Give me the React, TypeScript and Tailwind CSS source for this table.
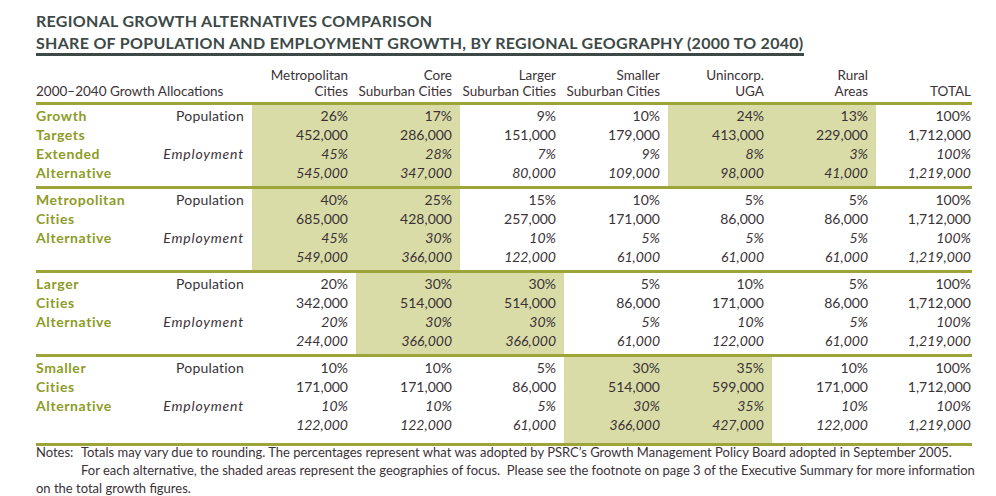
const COLUMNS: [string, string][] = [
  ["Metropolitan", "Cities"],
  ["Core", "Suburban Cities"],
  ["Larger", "Suburban Cities"],
  ["Smaller", "Suburban Cities"],
  ["Unincorp.", "UGA"],
  ["Rural", "Areas"],
];

type Group = {
  name: string[];
  shaded: number[];
  popPct: string[];
  pop: string[];
  empPct: string[];
  emp: string[];
};

const GROUPS: Group[] = [
  {
    name: ["Growth", "Targets", "Extended", "Alternative"],
    shaded: [0, 1, 4, 5],
    popPct: ["26%", "17%", "9%", "10%", "24%", "13%", "100%"],
    pop: ["452,000", "286,000", "151,000", "179,000", "413,000", "229,000", "1,712,000"],
    empPct: ["45%", "28%", "7%", "9%", "8%", "3%", "100%"],
    emp: ["545,000", "347,000", "80,000", "109,000", "98,000", "41,000", "1,219,000"],
  },
  {
    name: ["Metropolitan", "Cities", "Alternative"],
    shaded: [0, 1],
    popPct: ["40%", "25%", "15%", "10%", "5%", "5%", "100%"],
    pop: ["685,000", "428,000", "257,000", "171,000", "86,000", "86,000", "1,712,000"],
    empPct: ["45%", "30%", "10%", "5%", "5%", "5%", "100%"],
    emp: ["549,000", "366,000", "122,000", "61,000", "61,000", "61,000", "1,219,000"],
  },
  {
    name: ["Larger", "Cities", "Alternative"],
    shaded: [1, 2],
    popPct: ["20%", "30%", "30%", "5%", "10%", "5%", "100%"],
    pop: ["342,000", "514,000", "514,000", "86,000", "171,000", "86,000", "1,712,000"],
    empPct: ["20%", "30%", "30%", "5%", "10%", "5%", "100%"],
    emp: ["244,000", "366,000", "366,000", "61,000", "122,000", "61,000", "1,219,000"],
  },
  {
    name: ["Smaller", "Cities", "Alternative"],
    shaded: [3, 4],
    popPct: ["10%", "10%", "5%", "30%", "35%", "10%", "100%"],
    pop: ["171,000", "171,000", "86,000", "514,000", "599,000", "171,000", "1,712,000"],
    empPct: ["10%", "10%", "5%", "30%", "35%", "10%", "100%"],
    emp: ["122,000", "122,000", "61,000", "366,000", "427,000", "122,000", "1,219,000"],
  },
];

const FONT = "font-['Lato','Noto_Sans',sans-serif]";

function GroupRow({ group, last }: { group: Group; last: boolean }) {
  const pad = last ? "pt-px pb-[9px]" : "pt-px pb-[4px]";
  return (
    <div className="flex border-b-[3px] border-[#9da43a]">
      <div className={`flex w-[216px] shrink-0 text-[14px] leading-[19px] ${pad}`}>
        <div className="flex-1 font-bold tracking-[0.6px] text-[#8d9b27]">
          {group.name.map((line) => (
            <div key={line}>{line}</div>
          ))}
        </div>
        <div className="w-[100px] pr-2 text-right text-[#3b3238]">
          <div className="tracking-[0.2px]">Population</div>
          <div>&nbsp;</div>
          <div className="italic tracking-[0.8px]">Employment</div>
        </div>
      </div>
      {group.popPct.map((_, i) => {
        const shaded = group.shaded.includes(i);
        const total = i === 6;
        return (
          <div
            key={i}
            className={`shrink-0 text-right text-[14px] leading-[19px] text-[#3b3238] ${pad} ${
              total ? "w-[96px] pr-px" : "w-[104px] pr-2"
            } ${shaded ? "bg-[#d9dca7]" : ""}`}
          >
            <div>{group.popPct[i]}</div>
            <div>{group.pop[i]}</div>
            <div className="italic">{group.empPct[i]}</div>
            <div className="italic">{group.emp[i]}</div>
          </div>
        );
      })}
    </div>
  );
}

export default function App() {
  return (
    <div className={`h-[496px] w-[996px] overflow-hidden bg-white px-9 pt-[11px] ${FONT}`}>
      <h1 className="text-[16px] font-bold leading-[20px] tracking-[0.3px] text-[#3d4947]">
        REGIONAL GROWTH ALTERNATIVES COMPARISON
      </h1>
      <h2 className="inline-block border-b-[3px] border-[#3d4947] text-[16px] font-bold leading-[20px] tracking-[0.3px] text-[#3d4947]">
        SHARE OF POPULATION AND EMPLOYMENT GROWTH, BY REGIONAL GEOGRAPHY (2000 TO 2040)
      </h2>

      <div className="mt-[11px] w-[936px]">
        <div className="flex items-end border-b-[3px] border-[#9da43a] pb-[3px] text-[13.5px] leading-[16px] text-[#3b3238]">
          <div className="w-[216px] shrink-0">2000–2040 Growth Allocations</div>
          {COLUMNS.map(([a, b]) => (
            <div key={a} className="w-[104px] shrink-0 pr-2 text-right">
              <div>{a}</div>
              <div>{b}</div>
            </div>
          ))}
          <div className="w-[96px] shrink-0 pr-px text-right">TOTAL</div>
        </div>
        {GROUPS.map((g, i) => (
          <GroupRow key={g.name.join(" ")} group={g} last={i === GROUPS.length - 1} />
        ))}
      </div>

      <div className="-mt-[3px] text-[13px] leading-[18px] text-[#3b3238]">
        <div className="flex whitespace-nowrap">
          <div className="w-[45px] shrink-0">Notes:</div>
          <div>
            Totals may vary due to rounding. The percentages represent what was adopted by PSRC’s Growth
            Management Policy Board adopted in September 2005.
            <br />
            For each alternative, the shaded areas represent the geographies of focus.&nbsp; Please see the
            footnote on page 3 of the Executive Summary for more information
          </div>
        </div>
        <div>on the total growth figures.</div>
      </div>
    </div>
  );
}
